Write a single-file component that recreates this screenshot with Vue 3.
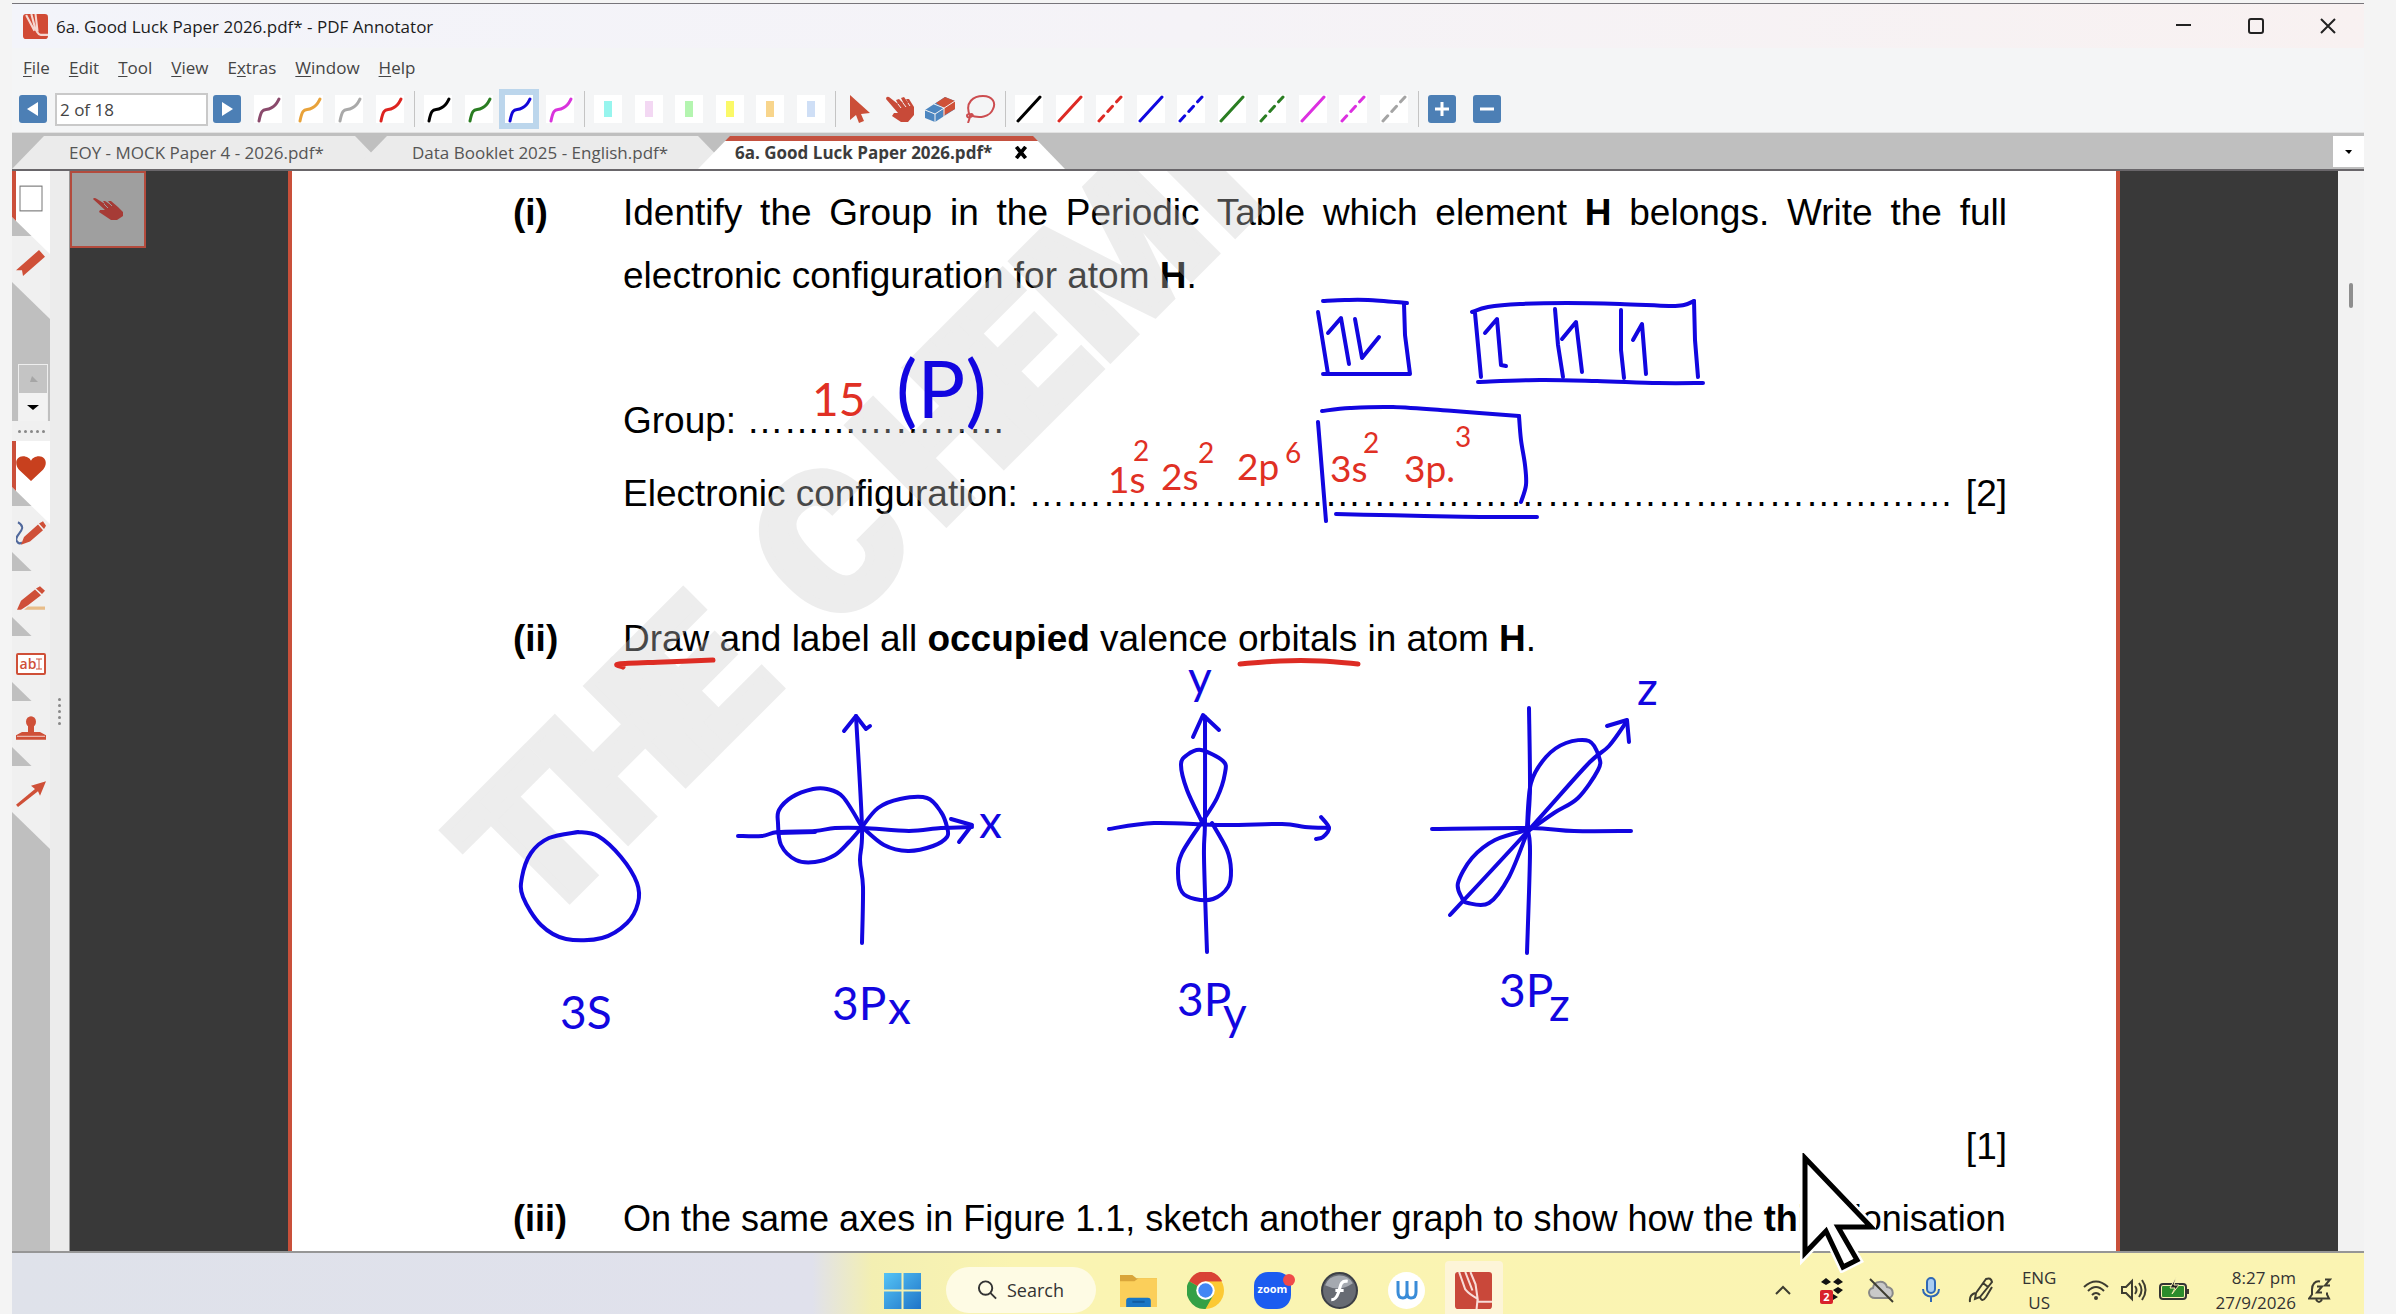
<script setup>
import { ref } from 'vue'

const page = ref('2 of 18')

const menus = [
  ['', 'F', 'ile'], ['', 'E', 'dit'], ['', 'T', 'ool'], ['', 'V', 'iew'],
  ['E', 'x', 'tras'], ['', 'W', 'indow'], ['', 'H', 'elp'],
]
const tabs = [
  { title: 'EOY - MOCK Paper 4 - 2026.pdf*' },
  { title: 'Data Booklet 2025 - English.pdf*' },
  { title: '6a. Good Luck Paper 2026.pdf*', active: true },
]
const pensA = ['#8a4a6c', '#e8a23a', '#a9a9a9', '#dd2420']
const pensB = ['#000000', '#2a7d22', '#1206d8', '#d934dc']
const markers = ['#97f5ee', '#f3d8f3', '#b4f5b0', '#fbf968', '#f8d58c', '#cfdff6']
const lines = [
  ['#000000', 0], ['#dd2a24', 0], ['#dd2a24', 1], ['#1008e0', 0], ['#1008e0', 1],
  ['#2a7d22', 0], ['#2a7d22', 1], ['#dc30e0', 0], ['#dc30e0', 1], ['#a4a4a4', 1],
]

/* Smooth curve through a list of pen samples */
function ink(p) {
  let d = `M${p[0]} ${p[1]}`
  const n = p.length / 2
  const at = (i) => {
    const k = Math.max(0, Math.min(n - 1, i))
    return [p[2 * k], p[2 * k + 1]]
  }
  for (let i = 0; i < n - 1; i++) {
    const [a, b, c, e] = [at(i - 1), at(i), at(i + 1), at(i + 2)]
    d += `C${b[0] + (c[0] - a[0]) / 6} ${b[1] + (c[1] - a[1]) / 6} ${c[0] - (e[0] - b[0]) / 6} ${c[1] - (e[1] - b[1]) / 6} ${c[0]} ${c[1]}`
  }
  return d
}

const blueCurves = [
  // spin boxes
  [1323, 301, 1345, 300, 1368, 300, 1407, 303],
  [1472, 312, 1488, 307, 1520, 304, 1567, 303, 1620, 304, 1669, 306, 1684, 305, 1694, 301],
  [1478, 382, 1540, 380, 1597, 381, 1658, 383, 1703, 383],
  [1322, 411, 1350, 408, 1393, 407, 1454, 411, 1519, 416],
  [1519, 416, 1521, 440, 1525, 465, 1526, 485, 1521, 502],
  [1336, 514, 1380, 515, 1424, 516, 1480, 517, 1537, 517],
  // 3s
  [578, 832, 598, 836, 621, 857, 637, 883, 638, 903, 627, 923, 602, 938, 566, 939, 541, 925, 523, 897, 522, 877, 531, 853, 549, 838, 578, 832],
  // 3px
  [856, 716, 862, 827, 860, 860, 863, 887, 862, 943],
  [738, 836, 762, 836, 778, 832, 815, 831, 835, 828, 864, 828, 909, 831, 941, 828, 972, 827],
  [862, 827, 843, 797, 827, 789, 813, 789, 792, 797, 779, 810, 778, 823, 781, 845, 796, 860, 815, 862, 835, 855, 849, 842, 862, 827],
  [862, 827, 878, 808, 900, 799, 927, 798, 941, 812, 947, 827, 947, 837, 933, 846, 908, 851, 884, 845, 862, 827],
  // 3py
  [1205, 717, 1205, 820, 1204, 857, 1207, 952],
  [1109, 829, 1154, 823, 1223, 825, 1282, 824, 1305, 827, 1329, 828],
  [1321, 817, 1329, 828, 1323, 837, 1316, 839],
  [1202, 822, 1187, 790, 1181, 765, 1187, 755, 1201, 750, 1223, 761, 1225, 773, 1217, 798, 1202, 822],
  [1202, 822, 1182, 853, 1178, 873, 1182, 892, 1195, 899, 1213, 899, 1228, 887, 1231, 870, 1227, 850, 1212, 823],
  // 3pz
  [1529, 708, 1530, 787, 1528, 827, 1530, 853, 1527, 953],
  [1432, 829, 1529, 828, 1574, 831, 1631, 831],
  [1450, 915, 1527, 832, 1587, 765, 1609, 746, 1627, 721],
  [1527, 827, 1531, 783, 1546, 757, 1566, 743, 1589, 741, 1599, 757, 1598, 770, 1578, 798, 1554, 813, 1527, 832],
  [1527, 830, 1495, 840, 1472, 858, 1458, 883, 1462, 898, 1468, 903, 1489, 903, 1509, 877, 1527, 833],
]
const blueSegments = [
  'M1404 304 1405 335 1410 374H1323', 'M1318 312 1328 374', 'M1328 333 1341 318 1349 364',
  'M1355 319 1362 358 1379 337', 'M1475 313 1481 377', 'M1694 301 1695 340 1698 377',
  'M1555 309 1558 345 1563 377', 'M1621 310V350L1624 378', 'M1485 333 1497 319 1501 365 1506 366',
  'M1562 339 1576 322 1582 372', 'M1633 340 1642 324 1646 374', 'M1318 422 1326 521',
  'M844 731 856 716 866 729 870 726', 'M951 819 972 825 959 842', 'M778 833 815 832',
  'M1193 737 1203 715 1219 730', 'M1607 726 1627 720 1629 742',
]
const redCurves = [
  [623, 667, 619, 664, 664, 662, 713, 660],
  [1240, 664, 1280, 661, 1321, 661, 1358, 664],
]

const sideTools = [
  { name: 'Favorites', id: 'heart', active: true }, { name: 'Pen', id: 'pen' }, { name: 'Marker', id: 'marker' },
  { name: 'Text', id: 'text' }, { name: 'Stamp', id: 'stamp' }, { name: 'Arrow', id: 'arrow' },
]
</script>

<template>
  <div class="screen">
    <div class="window">
      <header class="titlebar">
        <svg class="app-icon" viewBox="0 0 24 24"><rect width="24" height="24" rx="3" fill="#d14a35" /><path d="M3 1l8 15M8 0l4 15M12 0l2 17M12 15c2 2 2 5 5 5h7" fill="none" stroke="#f6d8d2" stroke-width="2" /></svg>
        <span class="title">6a. Good Luck Paper 2026.pdf* - PDF Annotator</span>
        <div class="controls">
          <button aria-label="Minimize"><svg viewBox="0 0 16 16"><path d="M0 7H15" /></svg></button>
          <button aria-label="Maximize"><svg viewBox="0 0 16 16"><rect x="1" y="1" width="14" height="14" rx="2" /></svg></button>
          <button aria-label="Close"><svg viewBox="0 0 16 16"><path d="M1 1 15 15M15 1 1 15" /></svg></button>
        </div>
      </header>

      <nav class="menubar">
        <button v-for="m in menus" :key="m[1] + m[2]">{{ m[0] }}<u>{{ m[1] }}</u>{{ m[2] }}</button>
      </nav>

      <div class="toolbar">
        <button class="nav-btn" aria-label="Previous page"><svg viewBox="0 0 28 28"><path d="M19 7V21L8 14Z" fill="#fff" /></svg></button>
        <input v-model="page" class="page-input" aria-label="Page">
        <button class="nav-btn next" aria-label="Next page"><svg viewBox="0 0 28 28"><path d="M9 7V21L20 14Z" fill="#fff" /></svg></button>
        <div class="group g4">
          <button v-for="c in pensA" :key="c" class="tile" aria-label="Pen"><svg viewBox="0 0 28 28"><path d="M5 26C8 10 11 17 17 13 22 11 23 8 25 4" fill="none" :stroke="c" stroke-width="3" stroke-linecap="round" /></svg></button>
        </div>
        <i class="sep" />
        <div class="group g4">
          <button v-for="(c, i) in pensB" :key="c" class="tile" :class="{ selected: i === 2 }" aria-label="Pen"><svg viewBox="0 0 28 28"><path d="M5 26C8 10 11 17 17 13 22 11 23 8 25 4" fill="none" :stroke="c" stroke-width="3" stroke-linecap="round" /></svg></button>
        </div>
        <i class="sep" />
        <div class="group g6">
          <button v-for="c in markers" :key="c" class="tile" aria-label="Highlighter"><svg viewBox="0 0 28 28"><rect x="10" y="6" width="8" height="16" :fill="c" /></svg></button>
        </div>
        <i class="sep" />
        <div class="group g4">
          <button class="tool" aria-label="Select"><svg viewBox="0 0 28 28"><path d="M5 0V25L11 20 14 28 19 26 16 19 25 18Z" fill="#cb4f38" /></svg></button>
          <button class="tool" aria-label="Pan"><svg viewBox="0 0 28 28"><path d="M0 4Q0 1 3 2L12 9 10 5 13 4 18 9 15 3 18 2 23 9 20 4 23 4 28 12V20L22 27H15L6 21 8 18 12 18Z" fill="#c84a38" /><path d="M12 9 15 13M17 8 20 12M22 8 24 11" stroke="#f4f4f4" /></svg></button>
          <button class="tool" aria-label="Eraser"><svg viewBox="0 0 30 28"><path d="M0 15 20 2 30 6V14L10 27 0 23Z" fill="#4c86c0" /><path d="M11 8 20 2 30 6V14L18 21 19 13Z" fill="#cf5138" /><path d="M0 15 10 19 30 6M10 19V27M9 9 19 13V22" fill="none" stroke="#f4f4f4" stroke-width="1" /></svg></button>
          <button class="tool" aria-label="Lasso"><svg viewBox="0 0 30 28"><path d="M4 21C-2 7 8 1 17 1 27 1 30 8 27 14 24 22 13 24 4 20M4 20C0 17 0 24 4 22 9 21 6 17 3 20M4 22 2 28" fill="none" stroke="#cc4d50" stroke-width="2" /></svg></button>
        </div>
        <i class="sep" />
        <div class="group g10">
          <button v-for="([c, dash], i) in lines" :key="i" class="tile" aria-label="Line"><svg viewBox="0 0 28 28"><path d="M3 26 25 2" :stroke="c" stroke-width="3" stroke-linecap="round" :stroke-dasharray="dash ? '7 6' : 'none'" /></svg></button>
        </div>
        <i class="sep" />
        <button class="nav-btn zoom-in" aria-label="Zoom in"><svg viewBox="0 0 28 28"><path d="M14 7V21M7 14H21" stroke="#fff" stroke-width="3" /></svg></button>
        <button class="nav-btn" aria-label="Zoom out"><svg viewBox="0 0 28 28"><path d="M7 14H21" stroke="#fff" stroke-width="3" /></svg></button>
      </div>

      <div class="tabbar">
        <div v-for="t in tabs" :key="t.title" class="tab" :class="{ active: t.active }">
          <button>{{ t.title }}</button>
          <button v-if="t.active" class="close" aria-label="Close tab"><svg viewBox="0 0 14 14"><path d="M2 1 12 13M12 1 2 13" stroke="#000" stroke-width="4" /></svg></button>
        </div>
        <button class="tab-list" aria-label="All tabs"><svg viewBox="0 0 8 6"><path d="M0 1H7L4 5Z" /></svg></button>
      </div>

      <main class="workspace">
        <aside class="side">
          <div class="rail">
            <button class="rail-tab active" aria-label="Pages"><svg viewBox="0 0 30 24" preserveAspectRatio="none"><rect x="4" y="1" width="22" height="22" fill="#fff" stroke="#777" stroke-width="1" /></svg></button>
            <button class="rail-tab" aria-label="Bookmarks"><svg viewBox="0 0 30 24" preserveAspectRatio="none"><path d="M23 0 29 6 7 23 6 18 0 18Z" fill="#cf5038" /></svg></button>
            <div class="spin">
              <button disabled aria-label="Up"><svg viewBox="0 0 12 8"><path d="M3 7H11L5 1Z" fill="#a6a6a6" /></svg></button>
              <button aria-label="Down"><svg viewBox="0 0 12 8"><path d="M0 2H12L6 7Z" /></svg></button>
            </div>
            <div class="grip"><i v-for="n in 5" :key="n" /></div>
            <button v-for="s in sideTools" :key="s.id" class="rail-tab" :class="{ active: s.active }" :aria-label="s.name">
              <svg v-if="s.id === 'heart'" viewBox="0 0 30 24" preserveAspectRatio="none"><path d="M15 23 3 13C-2 8 0 1 7 1 11 1 14 3 15 5 16 3 19 1 23 1 30 1 32 8 27 13Z" fill="#c8401e" /></svg>
              <svg v-if="s.id === 'pen'" viewBox="0 0 30 24" preserveAspectRatio="none"><path d="M2 2C14 8-4 14 1 19Q3 22 6 20" fill="none" stroke="#51699c" stroke-width="2" /><path d="M5 22 8 15 22 4 27 9 14 19ZM23 3 27 1 30 5 28 8Z" fill="#cf5038" /></svg>
              <svg v-if="s.id === 'marker'" viewBox="0 0 30 24" preserveAspectRatio="none"><path d="M12 19H29V22H8Z" fill="#e8bd8a" /><path d="M1 22 5 14 19 4 25 9 12 18 5 22ZM20 3 24 1 29 5 26 8Z" fill="#cf5038" /></svg>
              <span v-if="s.id === 'text'" class="ab">ab<svg viewBox="0 0 6 12"><path d="M0 1H6M0 11H6M3 1V11" stroke="#cf5038" /></svg></span>
              <svg v-if="s.id === 'stamp'" viewBox="0 0 30 24" preserveAspectRatio="none"><circle cx="15" cy="6" r="5" fill="#cf5038" /><path d="M12 9H18V15H24L30 18V22H0V18L6 15H12ZM1 23H29" fill="#cf5038" /><path d="M1 19H29" stroke="#e9b4ac" /></svg>
              <svg v-if="s.id === 'arrow'" viewBox="0 0 30 24" preserveAspectRatio="none"><path d="M0 22 19 8 15 5 30 1 24 14 22 10 2 24Z" fill="#cf5038" /></svg>
            </button>
          </div>
          <div class="strip"><div class="vgrip"><i v-for="n in 5" :key="n" /></div></div>
        </aside>

        <section class="canvas">
          <div class="margin">
            <button class="hand" aria-label="Hand tool"><svg viewBox="0 0 30 24"><path d="M0 1Q1-1 4 1L12 6 10 3 12 3 18 7 15 3 18 3 25 9 30 14V18L24 22H18L6 14 7 12 12 12Z" fill="#a63b36" /><path d="M11 6 15 10M15 4 19 8" stroke="#9f9f9f" /></svg></button>
          </div>
          <article class="paper">
            <div class="question">
              <b>(i)</b>
              <div>
                <p class="just">Identify the Group in the Periodic Table which element <b>H</b> belongs. Write the full electronic configuration for atom <b>H</b>.</p>
                <div class="answers">
                  <p>Group: …………………</p>
                  <p class="row"><span>Electronic configuration: …………………………………………………………………</span><span>[2]</span></p>
                </div>
              </div>
            </div>
            <div class="question second">
              <b>(ii)</b>
              <div>
                <p>Draw and label all <b>occupied</b> valence orbitals in atom <b>H</b>.</p>
                <p class="mark">[1]</p>
              </div>
            </div>
            <div class="question third">
              <b>(iii)</b>
              <p class="single">On the same axes in Figure 1.1, sketch another graph to show how the <b>third</b> ionisation</p>
            </div>

            <svg class="overlay" viewBox="292 171 1824 1080" width="1824" height="1080">
              <g class="watermark" transform="translate(734 734) rotate(-45)">
                <text y="0" x="-276 -160 -40">THE</text>
                <text y="0" x="140 290 412 522 696 780">CHEMIS</text>
              </g>
              <g class="ink red">
                <path v-for="(c, i) in redCurves" :key="i" :d="ink(c)" />
              </g>
              <g class="ink blue">
                <path v-for="(c, i) in blueCurves" :key="i" :d="ink(c)" />
                <path v-for="s in blueSegments" :key="s" :d="s" />
              </g>
              <g class="hand-text red-text">
                <text x="812" y="416" class="xl">15</text>
                <text x="1108" y="493">1s</text><text x="1133" y="461" class="sup">2</text>
                <text x="1161" y="490">2s</text><text x="1198" y="463" class="sup">2</text>
                <text x="1237" y="480">2p</text><text x="1285" y="463" class="sup">6</text>
                <text x="1330" y="482">3s</text><text x="1363" y="453" class="sup">2</text>
                <text x="1404" y="482">3p.</text><text x="1455" y="447" class="sup">3</text>
              </g>
              <g class="hand-text blue-text">
                <text x="896" y="418" class="paren">(P)</text>
                <text x="979" y="838" class="xl">x</text><text x="1188" y="694" class="xl">y</text><text x="1637" y="705" class="xl">z</text>
                <text x="560" y="1029" class="xl">3S</text>
                <text x="832" y="1020" class="xl">3P</text><text x="888" y="1024" class="xl">x</text>
                <text x="1177" y="1016" class="xl">3P</text><text x="1223" y="1030" class="xl">y</text>
                <text x="1499" y="1007" class="xl">3P</text><text x="1549" y="1021" class="xl">z</text>
              </g>
            </svg>
          </article>
          <div class="margin" />
        </section>
        <div class="scroll"><i /></div>
      </main>

      <footer class="taskbar">
        <span />
        <div class="apps">
          <button aria-label="Start"><svg viewBox="0 0 36 36"><defs><linearGradient id="win" x2="1" y2="1"><stop stop-color="#55c4f6" /><stop offset="1" stop-color="#1f74c8" /></linearGradient></defs><path d="M0 1H17V17H0ZM19 1H36V17H19ZM0 19H17V36H0ZM19 19H36V36H19Z" fill="url(#win)" /></svg></button>
          <button class="search"><svg viewBox="0 0 22 22"><circle cx="9" cy="9" r="7" fill="none" stroke="#333" stroke-width="2" /><path d="M14 14 20 20" stroke="#333" stroke-width="2" /></svg>Search</button>
          <button aria-label="File Explorer"><svg viewBox="0 0 36 36"><path d="M0 3H12L16 6H36V34H0Z" fill="#d9a53a" /><path d="M0 9H14L18 6H36V34H0Z" fill="#fbcf5a" /><path d="M6 34V28Q6 25 9 25H27Q30 25 30 28V34Z" fill="#1976c5" /><path d="M12 29H24" stroke="#0f5ca3" stroke-width="2" /></svg></button>
          <button aria-label="Chrome"><svg viewBox="0 0 36 36"><circle cx="18" cy="18" r="18" fill="#fcc934" /><path d="M18 18 2 9A18 18 0 0 1 34 9H18Z" fill="#d94335" /><path d="M18 18 2 9A18 18 0 0 0 18 36L26 22Z" fill="#34a046" /><path d="M18 9H34A18 18 0 0 0 18 0Z" fill="#d94335" /><circle cx="18" cy="18" r="9" fill="#fff" /><circle cx="18" cy="18" r="7" fill="#4286f4" /></svg></button>
          <button aria-label="Zoom"><span class="zoom">zoom</span></button>
          <button aria-label="Flash"><svg viewBox="0 0 36 36"><circle cx="18" cy="18" r="17" fill="#676b73" stroke="#3c3f46" stroke-width="2" /><path d="M4 13A15 15 0 0 1 31 11Q18 20 4 13" fill="#a5a9b0" /><path d="M26 9C18 8 19 15 17 20 15 26 13 27 10 27M14 18H22" fill="none" stroke="#fff" stroke-width="3" /></svg></button>
          <button aria-label="W"><span class="w"><svg viewBox="0 0 24 24"><path d="M3 3V14Q3 20 8 20 12 20 12 14V3M12 14Q12 20 16 20 21 20 21 14V3" fill="none" stroke="#3a8cd8" stroke-width="3" /></svg></span></button>
          <button class="current" aria-label="PDF Annotator"><svg viewBox="0 0 36 36"><rect width="36" height="36" rx="3" fill="#c9483a" /><path d="M4 0 10 17Q14 22 22 26L20 12 15 0M10 0 17 18M22 26 21 36M21 29H36" fill="none" stroke="#f8dcd8" stroke-width="2" /></svg></button>
        </div>
        <div class="tray">
          <svg class="chev" viewBox="0 0 16 10"><path d="M1 9 8 2 15 9" /></svg>
          <span class="dropbox"><svg viewBox="0 0 24 26"><path d="M1 5 6 1 11 5 6 8ZM13 5 18 1 23 5 18 8ZM13 13 18 10 23 13 18 17ZM8 20 13 17 18 20 13 23Z" fill="#111" stroke="none" /></svg><b>2</b></span>
          <svg class="t26" viewBox="0 0 26 26"><path d="M7 21C0 21-1 12 5 11 6 3 17 3 19 10 27 11 26 21 20 21Z" fill="#c9c9c9" stroke="#888" /><path d="M2 2 25 25" /></svg>
          <svg class="t26" viewBox="0 0 26 26"><rect x="9" y="1" width="8" height="15" rx="4" stroke="#2f68b5" fill="#a9cdf2" /><path d="M5 12C5 22 21 22 21 12M13 20V25" stroke="#2f68b5" /></svg>
          <svg class="t26" viewBox="0 0 26 26"><path d="M8 16 18 2Q23 0 24 5L12 20 7 22ZM15 6 20 10M7 16Q1 18 2 25M12 20Q14 26 18 20L24 10" /></svg>
          <span class="lang">ENG<br>US</span>
          <span class="net">
            <svg class="t26" viewBox="0 0 26 26"><path d="M1 10Q13-1 25 10M5 14Q13 6 21 14M9 18Q13 14 17 18" /><circle cx="13" cy="21" r="1" /></svg>
            <svg class="t26" viewBox="0 0 26 26"><path d="M1 10H5L11 4V22L5 16H1ZM14 9Q17 13 14 17M18 6Q23 13 18 20M21 3Q28 13 21 23" /></svg>
            <svg class="battery" viewBox="0 0 32 26"><rect x="1" y="7" width="26" height="15" rx="3" stroke="#333" /><rect x="3" y="9" width="22" height="11" rx="1" fill="#2b8c2b" stroke="none" /><path d="M29 12V17" /><path d="M17 0 11 11H16L13 17 20 8H15Z" fill="#222" stroke="#f8f2b4" stroke-width="1" /></svg>
          </span>
          <span class="clock">8:27 pm<br>27/9/2026</span>
          <span class="bell"><svg viewBox="0 0 24 26"><path d="M12 4C7 3 4 7 4 12V17L1 21H21L19 17V15M8 22Q11 27 14 22M9 9H14L9 15H14M17 2H22L17 8H22" /></svg></span>
        </div>
      </footer>
      <svg class="cursor" viewBox="0 0 76 120"><path d="M5 5V100L26 78 43 114 57 107 38 74H71Z" fill="#fff" stroke="#fff" stroke-width="10" /><path d="M5 5V100L26 78 43 114 57 107 38 74H71Z" fill="#fff" stroke="#000" stroke-width="5" /></svg>
    </div>
  </div>
</template>

<style>
body { margin: 0; background: #f4f4f4; }
</style>

<style scoped>
* { box-sizing: border-box; }
button { font: inherit; color: inherit; background: none; border: 0; padding: 0; margin: 0; }
svg { display: block; }
p { margin: 0; }
.screen { min-height: 100vh; padding: 3px 32px 0 12px; display: flex; overflow: hidden; font-family: "Open Sans", "Noto Sans", sans-serif; }
.window { position: relative; flex: 1; min-width: 0; display: flex; flex-direction: column; border-top: 1px solid #77757a; background: #f4f5f6; }

.titlebar { display: flex; align-items: center; height: 44px; padding-left: 11px; background: linear-gradient(90deg, #f3f4fa, #f5f3f7 50%, #f8f1f1); }
.app-icon { width: 25px; height: 25px; margin-right: 8px; }
.title { flex: 1; font-size: 17px; color: #1c1c1c; white-space: nowrap; }
.controls { display: flex; }
.controls button { width: 72px; display: flex; justify-content: center; }
.controls svg { width: 16px; height: 16px; fill: none; stroke: #222; stroke-width: 2; }
.menubar { display: flex; gap: 19px; height: 38px; align-items: center; padding-left: 11px; font-size: 17px; color: #444; }
.menubar u { text-underline-offset: 2px; }

.toolbar { display: flex; align-items: center; height: 47px; padding-left: 7px; border-bottom: 1px solid #e2e2e2; }
.nav-btn { width: 28px; height: 28px; background: #4c7fb5; border-radius: 3px; }
.page-input { width: 153px; height: 33px; margin: 0 5px 0 8px; padding: 0 3px; border: 2px solid #c9c9c9; background: #fff; font: 17px "Open Sans", sans-serif; color: #444; }
.next { margin-right: 7px; }
.group { display: grid; grid-auto-flow: column; grid-auto-columns: 1fr; justify-items: center; align-items: center; }
.g4 { width: 162px; }
.g6 { width: 243px; }
.g10 { width: 405px; }
.tile { width: 40px; height: 40px; padding: 6px; }
.tile svg { width: 28px; height: 28px; background: #fff; }
.tile.selected { background: #bcd6ec; }
.tool svg { width: 30px; height: 28px; }
.sep { width: 8px; height: 36px; background: linear-gradient(#c4c4c4, #c4c4c4) center / 1px 100% no-repeat; }
.zoom-in { margin: 0 17px 0 6px; }

.tabbar { display: flex; height: 38px; padding-top: 3px; background: #bfbfbf; border-bottom: 2px solid #69666a; color: #555; font-size: 17px; line-height: 24px; }
.tab { display: flex; align-items: center; width: 375px; height: 33px; padding-left: 57px; background: #ebebeb; clip-path: polygon(32px 0, calc(100% - 32px) 0, 100% 100%, 0 100%); margin-right: -32px; white-space: nowrap; }
.tab.active { width: 367px; padding-left: 37px; margin: 0; background: linear-gradient(#c4513f 5px, #fff 5px); color: #3c3c3c; font-weight: 700; }
.close { margin-left: 22px; }
.close svg { width: 14px; height: 13px; }
.tab-list { margin-left: auto; width: 31px; height: 31px; background: #fff; display: flex; align-items: center; justify-content: center; }
.tab-list svg { width: 8px; height: 6px; }

.workspace { flex: 1; min-height: 0; display: flex; border-bottom: 2px solid #969696; overflow: hidden; }
.side { display: flex; width: 58px; border-right: 1px solid #999; }
.rail { width: 38px; background: #bfbfbf; display: flex; flex-direction: column; }
.rail-tab { flex: none; width: 38px; height: 83px; margin-bottom: -18px; padding: 0 4px 28px; background: #f0f0f0; clip-path: polygon(0 0, 100% 0, 100% 100%, 0 46px); }
.rail-tab.active { position: relative; background: #fff; border-left: 4px solid #cb4f3a; padding-left: 0; z-index: 1; }
.rail-tab svg { width: 30px; height: 27px; }
.spin { flex: none; margin: 63px 2px 0 6px; height: 57px; border: 1px solid #eee; border-bottom: 0; display: grid; background: #f2f2f2; }
.spin button { display: flex; align-items: center; justify-content: center; }
.spin button:disabled { background: #c4c4c4; }
.spin svg { width: 12px; height: 8px; }
.grip { flex: none; height: 20px; background: #f0f0f0; display: flex; align-items: center; justify-content: center; gap: 3px; }
.grip i, .vgrip i { width: 3px; height: 3px; border-radius: 2px; background: #888; }
.ab { display: flex; align-items: center; justify-content: center; height: 22px; border: 2px solid #cf5038; border-radius: 2px; background: #fff; color: #cf5038; font-size: 14px; font-weight: 600; line-height: 16px; }
.rail-tab .ab svg { width: 6px; height: 12px; }
.strip { flex: 1; background: #ececec; display: flex; justify-content: center; padding-top: 527px; }
.vgrip { display: grid; gap: 3px; align-content: start; }

.canvas { flex: 1; min-width: 0; display: grid; grid-template-columns: minmax(0, 218fr) minmax(0, 1832fr) minmax(0, 218fr); background: #393939; }
.hand { width: 76px; height: 77px; background: #9f9f9f; border: 2px solid #b34b3d; display: flex; align-items: center; justify-content: center; }
.hand svg { width: 30px; height: 24px; }
.paper { position: relative; min-width: 0; overflow: hidden; background: #fff; border: solid #c9503a; border-width: 0 4px; padding: 10px 109px 0 221px; font: 37px/63px "Liberation Sans", Arial, sans-serif; color: #000; }
.question { display: grid; grid-template-columns: 110px minmax(0, 1fr); }
.just { text-align: justify; }
.answers { margin-top: 77px; line-height: 73px; white-space: nowrap; }
.row { display: flex; justify-content: space-between; }
.second { margin-top: 77px; }
.mark { margin-top: 445px; text-align: right; }
.third { margin-top: 9px; height: 63px; font-size: 36px; }
.single { white-space: nowrap; }
.overlay { position: absolute; left: 0; top: 0; }
.watermark { font: 900 192px Roboto, Inter, sans-serif; fill: #ccc; stroke: #ccc; stroke-width: 9; opacity: .35; }
.ink { fill: none; stroke-width: 4; stroke-linecap: round; stroke-linejoin: round; }
.ink.blue { stroke: #1206e0; }
.ink.red { stroke: #dd2c24; stroke-width: 5; }
.hand-text { font: 37px Lato, "Open Sans", sans-serif; }
.red-text { fill: #e03024; }
.blue-text { fill: #1206e0; }
.sup { font-size: 28px; }
.xl { font-size: 46px; }
.paren { font-size: 80px; }

.scroll { width: 26px; background: #f2f2f2; display: flex; justify-content: center; padding-top: 112px; }
.scroll i { width: 4px; height: 25px; border-radius: 2px; background: #8e8e8e; }

.taskbar { display: grid; grid-template-columns: 1fr auto 1fr; height: 61px; padding-top: 8px; background: linear-gradient(90deg, #dfe2ea 0, #e0e1ec 800px, #f3efb2 860px, #faf4b2 1000px, #fbf4b2); overflow: hidden; color: #333; }
.apps { display: flex; align-items: center; height: 58px; gap: 9px; }
.apps button { width: 58px; height: 58px; display: flex; align-items: center; justify-content: center; }
.apps svg { width: 37px; height: 37px; }
.apps .search { width: 150px; height: 46px; margin: 0 5px; border-radius: 23px; background: #fefbe4; font-size: 18px; gap: 9px; }
.apps .search svg { width: 21px; height: 22px; }
.apps .current { background: #fdf5d8; border-radius: 4px; }
.zoom { position: relative; width: 37px; height: 37px; border-radius: 14px; background: #1c5cf0; color: #fff; font-size: 11px; font-weight: 700; line-height: 34px; }
.zoom::after { content: ""; position: absolute; right: -4px; top: 2px; width: 12px; height: 12px; border-radius: 6px; background: #f04a4a; }
.w { display: flex; align-items: center; justify-content: center; width: 37px; height: 37px; border-radius: 19px; background: #fff; }
.apps .w svg { width: 24px; height: 24px; }
.tray { display: flex; align-items: center; justify-content: flex-end; height: 58px; padding-right: 32px; font-size: 17px; line-height: 25px; }
.tray svg { fill: none; stroke: #3d3c30; stroke-width: 2; }
.chev { width: 16px; height: 10px; margin-right: 29px; }
.dropbox { position: relative; margin-right: 24px; }
.dropbox svg { width: 24px; height: 28px; }
.dropbox b { position: absolute; left: 0; bottom: 0; width: 13px; height: 14px; border-radius: 2px; background: #d8222c; color: #fff; font-size: 11px; line-height: 14px; text-align: center; }
.t26 { width: 26px; height: 26px; margin-right: 24px; }
.lang { text-align: center; margin: 0 27px 0 4px; }
.net { display: flex; }
.net .t26 { margin-right: 12px; }
.battery { width: 32px; height: 26px; margin-right: 24px; }
.clock { text-align: right; margin-right: 12px; white-space: nowrap; }
.bell svg { width: 24px; height: 27px; }
.cursor { position: absolute; right: 488px; bottom: 41px; width: 76px; height: 120px; }
</style>
